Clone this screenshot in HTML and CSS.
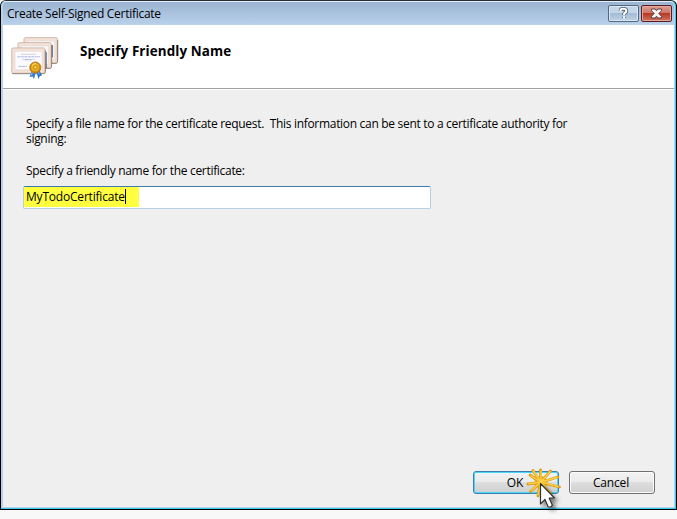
FILE: index.html
```html
<!DOCTYPE html>
<html lang="en">
<head>
<meta charset="utf-8">
<title>Create Self-Signed Certificate</title>
<link rel="stylesheet" href="styles.css">
</head>
<body>
<div class="window">
  <div class="frame">
    <header class="titlebar">
      <span class="title">Create Self-Signed Certificate</span>
      <div class="controls">
        <div class="control help"><svg width="29" height="15" viewBox="0 0 29 15"><path d="M11.7 5V4.3Q11.7 2.8 14.5 2.8T17.3 5Q17.3 6.2 15.8 7Q15 7.5 15 9M15 11v1" fill="none" stroke="#505a68" stroke-width="3.8"/><path d="M11.5 5.2V4.3Q11.7 2.8 14.5 2.8T17.3 5Q17.3 6.2 15.8 7Q15 7.5 15 8.9M15 10.4v2" fill="none" stroke="#fff" stroke-width="2.1"/></svg></div>
        <div class="control close"><svg width="29" height="15" viewBox="0 0 29 15"><path d="M9.5 3h3.6l1.4 1.7L15.9 3h3.6v1.7L16.8 7.5l2.7 2.8V12h-3.6l-1.4-1.8-1.4 1.8H9.5v-1.7l2.7-2.8-2.7-2.8z" fill="#f4f4f4" stroke="#5b4149"/></svg></div>
      </div>
    </header>
    <section class="banner">
      <svg class="certs" width="50" height="46" viewBox="0 0 50 46">
        <defs>
          <g id="cert"><path d="M.7 2V24.5Q.7 26 2.3 26H32.5Q34 26 34 24.3V2Q34 .6 32.5 .6H2.3Q.7.6.7 2Z" fill="#f2e1d6" stroke="#c8afa2" stroke-width=".8"/><path d="M1.2 26.4H33.2Q34.4 26 34.4 24V3" fill="none" stroke="#77645e" stroke-width=".7"/><path d="M4 4H31V22.5H4Z" fill="#fafaff" stroke="#e7d4cc" stroke-width=".5"/></g>
        </defs>
        <use href="#cert" x="12.3" y="0"/>
        <path d="M41.3 8V20.5" fill="none" stroke="#26365f" stroke-width=".8"/>
        <use href="#cert" x="6.2" y="5"/>
        <path d="M35.2 15V31" fill="none" stroke="#26365f" stroke-width=".8"/>
        <use href="#cert" x="0" y="10.3"/>
        <path d="M10 17.3H25M11 22.4H24" stroke="#c9ccd0" stroke-width=".8"/><path d="M6.3 19.8H29M14 22.8H21M7.5 29.4H16" stroke="#b3b6da" stroke-width="1" stroke-dasharray="3 .5"/>
        <path d="M21 33L18.5 40L21.5 39.5L23 42L25 35Z" fill="#397ed2"/><path d="M25.5 35L27.5 42L28.8 39L31 38.5L27.5 32Z" fill="#246bc5"/><path d="M21.5 35L20.3 38.3M27.5 34.5L28.2 37.5" stroke="#9bcbf7"/>
        <circle cx="24.3" cy="30.5" r="5.5" fill="#cf8a10" stroke="#b87b16"/><circle cx="24.1" cy="30.2" r="4" fill="#efb01d"/><circle cx="24.3" cy="30.3" r="1.8" fill="#f9d94d" stroke="#b07a1c" stroke-width=".8"/><path d="M21.1 28.5Q22.6 26.3 25.1 26.5" fill="none" stroke="#ffe889"/>
      </svg>
      <h1>Specify Friendly Name</h1>
    </section>
    <main class="content">
      <p class="description">Specify a file name for the certificate request.&nbsp; This information can be sent to a certificate authority for<br>signing:</p>
      <label class="label">Specify a friendly name for the certificate:</label>
      <div class="field"><div class="highlight"><span class="value">MyTodoCertificate</span><span class="caret"></span></div></div>
      <footer class="actions">
        <div class="button primary"><span>OK</span></div>
        <div class="button"><span>Cancel</span></div>
      </footer>
    </main>
  </div>
</div>
<svg class="pointer" width="45" height="52" viewBox="0 0 45 52">
  <defs><filter id="shadow" x="-50%" y="-50%" width="200%" height="200%"><feDropShadow dx="3" dy="3" stdDeviation="2" flood-color="#000" flood-opacity=".5"/></filter></defs>
  <path d="M24.5 21.5L17 9.5M24.5 21.5V9M24.5 21.5L34.5 10M24.5 21.5L42 16M24.5 21.5L43.5 26M24.5 21.5L35 33M24.5 21.5L22 35M24.5 21.5L14.5 30.5M24.5 21.5L12 23M24.5 21.5L14 14" fill="none" stroke="#dc9e18" stroke-width="2.8" stroke-linecap="round"/>
  <circle cx="25" cy="21.5" r="6.5" fill="#e2a51e"/>
  <path d="M25 21L17.3 10M25 21V10M25 21L34 10.8M25 21L41 16.5M25 21L42 25.5M25 21L34 31.5M25 21L22.4 33.5M25 21L15.3 29.5M25 21L13 22.8M25 21L15 14.8" fill="none" stroke="#ffcf45" stroke-width="1.4" stroke-linecap="round"/>
  <path d="M24.5 22.5V43L29 38.5L32.2 46H34.8L36.4 44.2L33.2 37.2L38.5 37Z" fill="#fff" stroke="#333" stroke-width="1.2" stroke-linejoin="round" filter="url(#shadow)"/>
</svg>
</body>
</html>
```
FILE: styles.css
```css
* { box-sizing: border-box; }
body { margin: 0; width: 677px; height: 519px; overflow: hidden; background: #f7f8f7; color: #000; font: 12px/15px "Open Sans", "Noto Sans", sans-serif; }
.window { width: 677px; height: 510px; border: 1px solid #000; border-top-color: #282c34; border-radius: 6px 6px 0 0; background: #36cdec; padding: 0 1px 1px 0; }
.frame { height: 507px; display: flex; flex-direction: column; background: #efefef; border: 1px solid #b9d1ea; border-top-color: #e4f0fa; border-left-width: 2px; border-radius: 5px 5px 0 0; overflow: hidden; }
.titlebar { height: 23px; flex: none; display: flex; justify-content: space-between; background: linear-gradient(#9bb4d1, #b9d1ea); padding: 0 2px 0 4px; }
.title { padding-top: 4px; letter-spacing: -.27px; white-space: nowrap; }
.controls { display: flex; gap: 2px; padding-top: 3px; }
.control { width: 31px; height: 17px; border: 1px solid #53677f; border-radius: 2px; box-shadow: inset 0 0 0 1px #dae7f5; background: linear-gradient(#c3d5e8 48%, #a4bcd5 50%, #bed2e6); }
.control svg { display: block; }
.close { border-color: #561e24; box-shadow: inset 0 0 0 1px #e4a69d; background: linear-gradient(#dda092, #cc7565 48%, #b53b23 50%, #d1745b); }
.banner { height: 64px; flex: none; background: #fff; border-bottom: 1px solid #a0a0a0; display: flex; padding-left: 8px; }
.certs { margin-top: 12px; }
h1 { margin: 16px 0 0 19px; font-size: 13.4px; line-height: 20px; font-weight: 700; letter-spacing: .11px; white-space: nowrap; }
.content { flex: 1; display: flex; flex-direction: column; padding: 26px 19px 13px 20px; border-top: 1px solid #fff; }
.description, .label { margin: 0 0 17px 3px; white-space: nowrap; letter-spacing: -.305px; }
.label { margin-bottom: 0; }
.field { width: 408px; height: 23px; margin-top: 8px; border: 1px solid #b7cfe5; border-top-color: #3d7bad; border-radius: 2px; background: #fff; }
.highlight { width: 115px; height: 20px; background: #ffff40; display: flex; padding: 2px 0 0 2px; }
.value { letter-spacing: -.2px; }
.caret { width: 1px; height: 15px; background: #000; }
.actions { margin-top: auto; display: flex; justify-content: flex-end; gap: 10px; }
.button { width: 86px; height: 23px; border: 1px solid #707070; border-radius: 3px; box-shadow: inset 0 0 0 1px #fcfcfc; background: linear-gradient(#f2f2f2, #ebebeb 48%, #dddddd 50%, #cfcfcf); padding-right: 2px; text-align: center; line-height: 21px; letter-spacing: -.15px; }
.primary { border-color: #3c7fb1; box-shadow: inset 0 0 0 1px #48d8fb; }
.pointer { position: absolute; left: 516px; top: 461px; overflow: visible; }
```
